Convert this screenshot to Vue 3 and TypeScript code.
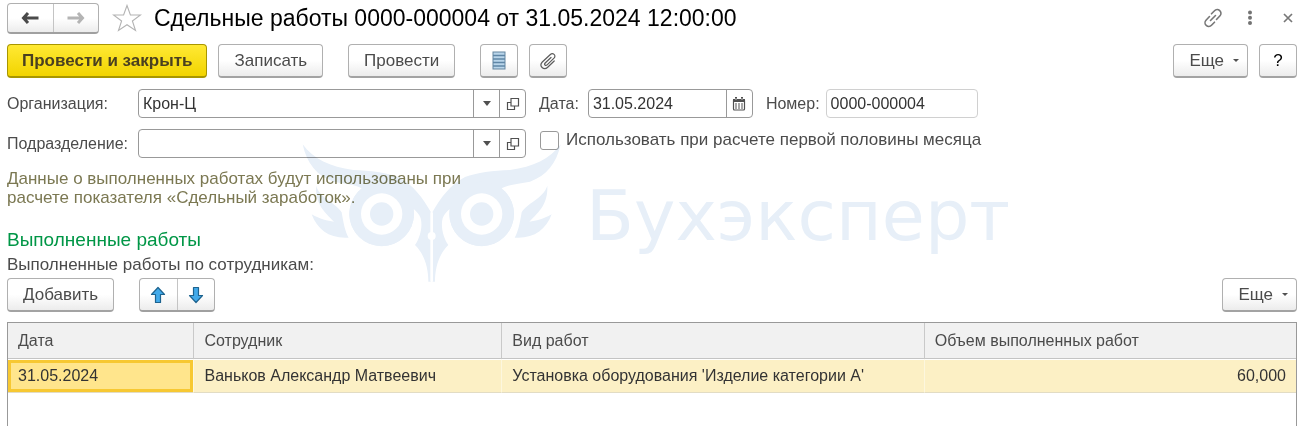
<script setup lang="ts">
import { ref } from 'vue'

interface WorkRow {
  date: string
  employee: string
  kind: string
  volume: string
}

const organization = ref('Крон-Ц')
const department = ref('')
const docDate = ref('31.05.2024')
const docNumber = ref('0000-000004')
const firstHalf = ref(false)
const selected = ref(0)

const rows = ref<WorkRow[]>([
  {
    date: '31.05.2024',
    employee: 'Ваньков Александр Матвеевич',
    kind: "Установка оборудования 'Изделие категории А'",
    volume: '60,000',
  },
])

function addRow() {
  rows.value.push({ date: '', employee: '', kind: '', volume: '' })
  selected.value = rows.value.length - 1
}

function moveRow(step: number) {
  const target = selected.value + step
  if (target < 0 || target >= rows.value.length) return
  const [row] = rows.value.splice(selected.value, 1)
  rows.value.splice(target, 0, row)
  selected.value = target
}
</script>

<template>
  <main class="page">
    <header class="titlebar">
      <div class="group nav">
        <button type="button" aria-label="Назад">
          <svg width="18" height="14" viewBox="0 0 18 14"><path d="M7 2 2.500 7 7 12M3 7H17.500" fill="none" stroke="#4a4a4a" stroke-width="3" /></svg>
        </button>
        <button type="button" aria-label="Вперед">
          <svg width="18" height="14" viewBox="0 0 18 14"><path d="M11 2 15.500 7 11 12M15 7H0.500" fill="none" stroke="#b4b4b4" stroke-width="3" /></svg>
        </button>
      </div>
      <button type="button" class="plain star" aria-label="В избранное">
        <svg width="30" height="28" viewBox="0 0 30 28"><path d="M15 1.500 18.400 11H28.500L20.400 17 23.500 26.500 15 20.700 6.500 26.500 9.600 17 1.500 11H11.600Z" fill="#fff" stroke="#b3b3b3" stroke-width="1.100" /></svg>
      </button>
      <h1>Сдельные работы 0000-000004 от 31.05.2024 12:00:00</h1>
      <div class="window-tools">
        <button type="button" class="plain" aria-label="Ссылка">
          <svg width="20" height="20" viewBox="0 0 20 20" fill="none" stroke="#777" stroke-width="1.600" stroke-linecap="round">
            <path d="M8.500 5.800 11.500 2.800a3.600 3.600 0 0 1 5.500 5L13.500 11.500M11.500 14.200 8.500 17.200a3.600 3.600 0 0 1-5.500-5L6.500 8.500M7.500 12.500l5-5" />
          </svg>
        </button>
        <button type="button" class="plain" aria-label="Меню">
          <svg width="6" height="16" viewBox="0 0 6 16" fill="#737373"><circle cx="3" cy="2.500" r="2" /><circle cx="3" cy="7.800" r="2" /><circle cx="3" cy="13.100" r="2" /></svg>
        </button>
        <button type="button" class="plain close" aria-label="Закрыть">
          <svg width="10" height="10" viewBox="0 0 10 10"><path d="M1 1l8 8M9 1 1 9" stroke="#777" stroke-width="1.700" /></svg>
        </button>
      </div>
    </header>

    <div class="toolbar">
      <button type="button" class="btn primary">Провести и закрыть</button>
      <button type="button" class="btn">Записать</button>
      <button type="button" class="btn post">Провести</button>
      <button type="button" class="btn icon list" aria-label="Движения документа">
        <svg width="14" height="19" viewBox="0 0 14 19">
          <rect x="1" y="1" width="12" height="17" fill="#b9d5ea" stroke="#64859f" />
          <path d="M1 4.500H13M1 8H13M1 11.500H13M1 15H13" stroke="#5f86a6" stroke-width="1.400" />
        </svg>
      </button>
      <button type="button" class="btn icon" aria-label="Присоединенные файлы">
        <svg width="18" height="18" viewBox="0 0 18 18" fill="none" stroke="#5c5c5c" stroke-width="1.200" stroke-linecap="round">
          <path d="M12 5.500 6.200 11c-1.500 1.700.4 3.300 1.900 1.900l6.900-6.700c2.600-2.900-1.100-6.200-3.900-3.500L3.300 10c-3.700 4 1.400 8.900 5.400 5.200l6.500-6.200" />
        </svg>
      </button>
      <button type="button" class="btn more">Еще <i class="caret small"></i></button>
      <button type="button" class="btn icon help" aria-label="Справка">?</button>
    </div>

    <div class="form">
      <label for="org">Организация:</label>
      <div class="field wide">
        <input id="org" v-model="organization" type="text" />
        <button type="button" aria-label="Выбрать организацию"><i class="caret"></i></button>
        <button type="button" aria-label="Открыть организацию">
          <svg width="14" height="14" viewBox="0 0 14 14" fill="none" stroke="#505050" stroke-width="1.200"><path d="M5 1.500H12.500V9H5ZM5 5.500H1.500V12.500H8.500V9" /></svg>
        </button>
      </div>
      <div class="inline">
        <label for="date">Дата:</label>
        <div class="field date">
          <input id="date" v-model="docDate" type="text" />
          <button type="button" aria-label="Календарь">
            <svg width="14" height="14" viewBox="0 0 14 14">
              <rect x="1.500" y="2.500" width="11" height="10.500" rx="1" fill="#fff" stroke="#505050" stroke-width="1.200" />
              <path d="M1 2h12v3H1z" fill="#505050" />
              <path d="M4 0v4M10 0v4" stroke="#505050" stroke-width="2" />
              <path d="M4 1v2M10 1v2" stroke="#fff" stroke-width="0.700" />
              <path d="M3 7h2M6 7h2M9 7h2M3 9h2M6 9h2M9 9h2M3 11h2M6 11h2M9 11h2" stroke="#505050" stroke-width="1.200" />
            </svg>
          </button>
        </div>
        <label for="number">Номер:</label>
        <div class="field number"><input id="number" v-model="docNumber" type="text" /></div>
      </div>

      <label for="dept">Подразделение:</label>
      <div class="field wide">
        <input id="dept" v-model="department" type="text" />
        <button type="button" aria-label="Выбрать подразделение"><i class="caret"></i></button>
        <button type="button" aria-label="Открыть подразделение">
          <svg width="14" height="14" viewBox="0 0 14 14" fill="none" stroke="#505050" stroke-width="1.200"><path d="M5 1.500H12.500V9H5ZM5 5.500H1.500V12.500H8.500V9" /></svg>
        </button>
      </div>
      <label class="check"><input v-model="firstHalf" type="checkbox" />Использовать при расчете первой половины месяца</label>
    </div>

    <p class="note">Данные о выполненных работах будут использованы при расчете показателя «Сдельный заработок».</p>

    <h2>Выполненные работы</h2>
    <p class="caption">Выполненные работы по сотрудникам:</p>

    <div class="toolbar table-tools">
      <button type="button" class="btn" @click="addRow">Добавить</button>
      <div class="group arrows">
        <button type="button" aria-label="Переместить вверх" @click="moveRow(-1)">
          <svg width="16" height="18" viewBox="0 0 16 18"><path d="M8 1.500 14.500 8.500H10.500V16.500H5.500V8.500H1.500Z" fill="#42aaea" stroke="#1d638f" stroke-width="1.200" stroke-linejoin="round" /></svg>
        </button>
        <button type="button" aria-label="Переместить вниз" @click="moveRow(1)">
          <svg width="16" height="18" viewBox="0 0 16 18"><path d="M8 16.500 14.500 9.500H10.500V1.500H5.500V9.500H1.500Z" fill="#42aaea" stroke="#1d638f" stroke-width="1.200" stroke-linejoin="round" /></svg>
        </button>
      </div>
      <button type="button" class="btn more">Еще <i class="caret small"></i></button>
    </div>

    <div class="table-box">
      <table>
        <colgroup><col class="c-date" /><col class="c-emp" /><col class="c-kind" /><col /></colgroup>
        <thead>
          <tr><th>Дата</th><th>Сотрудник</th><th>Вид работ</th><th>Объем выполненных работ</th></tr>
        </thead>
        <tbody>
          <tr v-for="(row, i) in rows" :key="i" :class="{ selected: i === selected }" @click="selected = i">
            <td>{{ row.date }}</td>
            <td>{{ row.employee }}</td>
            <td>{{ row.kind }}</td>
            <td class="num">{{ row.volume }}</td>
          </tr>
        </tbody>
      </table>
    </div>

    <div class="watermark" aria-hidden="true">
      <svg width="290" height="165" viewBox="0 0 870 495">
        <defs>
          <g id="owl-half">
            <path d="M38 28C70 72 120 96 190 105C240 107 290 113 325 126C370 150 398 188 423 232V440H415C415 400 404 358 375 330C392 306 398 272 392 250C388 238 380 230 371 222A97 97 0 1 1 215 160C200 150 165 146 130 140C80 122 50 85 38 28Z" />
            <path d="M78 152C90 190 140 205 155 232C160 262 165 290 176 308C120 312 82 285 65 238C90 252 112 258 132 260C100 228 76 205 78 152Z" />
            <circle cx="275" cy="237" r="97" />
            <circle cx="275" cy="237" r="62" fill="#fff" />
            <circle cx="275" cy="237" r="35" />
          </g>
        </defs>
        <g fill="#e7eff8">
          <use href="#owl-half" />
          <use href="#owl-half" transform="translate(850 0) scale(-1 1)" />
          <path d="M421 232h8v208h-8z" fill="#fff" />
          <circle cx="425" cy="303" r="12" fill="#fff" />
        </g>
      </svg>
      <span>Бухэксперт</span>
    </div>
  </main>
</template>

<style>
body {
  margin: 0;
  background: #fff;
}
</style>

<style scoped>
.page {
  position: relative;
  box-sizing: border-box;
  min-height: 100vh;
  display: flex;
  flex-direction: column;
  padding: 2px 16px 0 7px;
  overflow: hidden;
  font: 16px/20px "Liberation Sans", Arial, sans-serif;
  color: #4b4b4b;
}
* {
  box-sizing: border-box;
}
button,
input {
  font: inherit;
  color: inherit;
  margin: 0;
}
svg {
  display: block;
  flex: none;
}
h1,
h2,
p {
  margin: 0;
  font-weight: 400;
}
.titlebar {
  display: flex;
  align-items: center;
  height: 32px;
}
h1 {
  font-size: 23px;
  line-height: 28px;
  color: #000;
  white-space: nowrap;
}
.plain {
  display: flex;
  padding: 0;
  border: 0;
  background: none;
}
.star {
  margin: 0 12px 0 13px;
}
.window-tools {
  display: flex;
  align-items: center;
  gap: 24px;
  margin: 0 4px 0 auto;
}
.close {
  margin-left: 6px;
}
.group {
  display: flex;
  border: 1px solid #b0b0b0;
  border-bottom: 2px solid #a0a0a0;
  border-radius: 4px;
  background: linear-gradient(#fff 50%, #ececec);
}
.group button {
  display: flex;
  align-items: center;
  justify-content: center;
  flex: 1;
  padding: 0;
  border: 0;
  background: none;
}
.group button + button {
  border-left: 1px solid #c4c4c4;
}
.nav {
  width: 92px;
  height: 31px;
}
.toolbar {
  display: flex;
  margin-top: 10px;
}
.btn {
  display: flex;
  align-items: center;
  justify-content: center;
  height: 34px;
  padding: 0 15px;
  border: 1px solid #b0b0b0;
  border-bottom: 2px solid #a3a3a3;
  border-radius: 4px;
  background: linear-gradient(#fff 50%, #ececec);
  font-size: 17px;
  white-space: nowrap;
}
.btn + .btn {
  margin-left: 11px;
}
.primary {
  padding: 0 14px;
  border-color: #a89600;
  background: linear-gradient(#ffe934, #f2d400);
  font-weight: 700;
  color: #4a4020;
}
.btn.post,
.btn.list {
  margin-left: 25px;
}
.btn.icon {
  width: 38px;
  padding: 0;
}
.toolbar .more {
  margin-left: auto;
  gap: 9px;
  padding-right: 8px;
}
.help {
  color: #000;
}
.caret {
  border: 4px solid transparent;
  border-top: 5px solid #505050;
  border-bottom: 0;
}
.caret.small {
  border-width: 3px 3px 0;
}
.form {
  display: grid;
  grid-template-columns: 131px 388px auto;
  justify-content: start;
  align-items: center;
  row-gap: 11px;
  margin-top: 11px;
}
.field {
  display: flex;
  height: 29px;
  border: 1px solid #999;
  border-radius: 4px;
  background: #fff;
  overflow: hidden;
}
.field input {
  flex: 1;
  min-width: 0;
  padding: 0 4px;
  border: 0;
  outline: 0;
  background: none;
  color: #333;
}
.field button {
  display: flex;
  align-items: center;
  justify-content: center;
  width: 26px;
  padding: 0;
  border: 0;
  border-left: 1px solid #999;
  background: none;
}
.inline {
  display: flex;
  align-items: center;
  margin-left: 13px;
}
.inline .date {
  width: 165px;
  margin: 0 13px 0 9px;
}
.inline .number {
  width: 152px;
  margin-left: 6px;
  border-color: #d0d0d0;
}
.check {
  display: flex;
  align-items: center;
  align-self: start;
  gap: 7px;
  margin-left: 14px;
  font-size: 17px;
  line-height: 22px;
}
.check input {
  appearance: none;
  width: 19px;
  height: 19px;
  border: 1px solid #999;
  border-radius: 3px;
  background: #fff;
}
.check input:checked {
  background: #ffe100;
}
.note {
  max-width: 470px;
  margin-top: 11px;
  font-size: 17px;
  line-height: 19px;
  color: #7b7852;
}
h2 {
  margin-top: 21px;
  font-size: 19px;
  line-height: 24px;
  color: #009646;
}
.caption {
  margin-top: 3px;
  font-size: 17px;
}
.table-tools {
  margin-top: 3px;
}
.arrows {
  width: 76px;
  margin-left: 25px;
}
.table-box {
  flex: 1;
  margin-top: 10px;
  border: 1px solid #999;
  border-bottom: 0;
}
table {
  width: 100%;
  table-layout: fixed;
  border-collapse: separate;
  border-spacing: 0;
}
.c-date {
  width: 14.4%;
}
.c-emp {
  width: 23.9%;
}
.c-kind {
  width: 32.8%;
}
th {
  height: 36px;
  padding: 0 10px;
  border-bottom: 1px solid #c4c4c4;
  background: #f1f1f1;
  font-weight: 400;
  text-align: left;
}
th + th {
  border-left: 1px solid #c9c9c9;
}
td {
  height: 34px;
  padding: 0 10px;
  border-top: 1px solid #fff;
  border-bottom: 1px solid #e2dcc4;
  color: #333;
}
td + td {
  border-left: 1px solid #fdf7de;
}
.selected td {
  background: #fcf0c5;
}
.selected td:first-child {
  background: #ffe58c;
  box-shadow: inset 0 0 0 3px #f7c832;
}
.num {
  text-align: right;
}
.watermark {
  position: absolute;
  left: 290px;
  top: 135px;
  display: flex;
  mix-blend-mode: multiply;
  pointer-events: none;
}
.watermark span {
  margin-top: 33px;
  margin-left: 6px;
  font: 70px/96px "DejaVu Sans", sans-serif;
  color: #e7eff8;
}
</style>
